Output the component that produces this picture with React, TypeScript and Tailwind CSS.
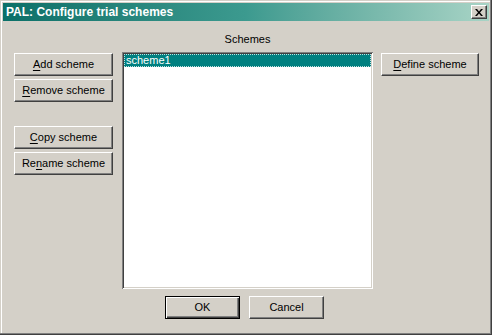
import React from 'react';

const raised =
  'border border-t-white border-l-white border-r-[#404040] border-b-[#404040] shadow-[inset_-1px_-1px_#808080]';

function Btn({ children, className = '', isDefault = false }: { children: React.ReactNode; className?: string; isDefault?: boolean }) {
  const frame = isDefault
    ? 'border border-black shadow-[inset_1px_1px_#fff,inset_-1px_-1px_#404040,inset_-2px_-2px_#808080]'
    : raised;
  return (
    <div className={`flex items-center justify-center h-[23px] bg-[#d4d0c8] text-[11px] text-black leading-none ${frame} ${className}`}>
      <span className="pb-[1px]">{children}</span>
    </div>
  );
}

export default function App() {
  return (
    <div
      className="w-[492px] h-[335px] bg-[#d4d0c8] p-[3px] flex flex-col shadow-[inset_-1px_-1px_#404040,inset_-2px_-2px_#808080,inset_1px_1px_#d4d0c8,inset_2px_2px_#fff]"
      style={{ fontFamily: '"Liberation Sans", Arial, sans-serif' }}
    >
      {/* title bar */}
      <div className="h-[18px] flex items-center justify-between bg-gradient-to-r from-[#0a7068] via-[#3c9a8f] to-[#a8d4c6] pl-[3px] pr-[2px]">
        <span className="text-white font-bold text-[12px] leading-none">PAL: Configure trial schemes</span>
        <div className={`w-[16px] h-[14px] flex items-center justify-center bg-[#d4d0c8] ${raised}`}>
          <svg width="8" height="7" viewBox="0 0 8 7">
            <path d="M0 0h2l2 2.5L6 0h2L5 3.5 8 7H6L4 4.5 2 7H0l3-3.5z" fill="#000" />
          </svg>
        </div>
      </div>

      {/* body */}
      <div className="flex pl-[11px]">
        <div className="flex flex-col w-[99px] mt-[32px]">
          <Btn><span className="underline underline-offset-2">A</span>dd scheme</Btn>
          <Btn className="mt-[3px]"><span className="underline underline-offset-2">R</span>emove scheme</Btn>
          <Btn className="mt-[24px]"><span className="underline underline-offset-2">C</span>opy scheme</Btn>
          <Btn className="mt-[3px]">Re<span className="underline underline-offset-2">n</span>ame scheme</Btn>
        </div>

        <div className="flex flex-col ml-[9px] w-[251px]">
          <div className="h-[31px] flex items-end justify-center pb-[7px] text-[11px] text-black leading-none">Schemes</div>
          <div className="h-[237px] bg-white p-[2px] shadow-[inset_1px_1px_#808080,inset_-1px_-1px_#fff,inset_2px_2px_#404040,inset_-2px_-2px_#d4d0c8]">
            <div className="h-[13px] bg-[#008080] text-white text-[11px] leading-none flex items-center pl-[2px] outline outline-1 outline-dotted outline-offset-[-1px] outline-[#c0e0e0]">
              scheme1
            </div>
          </div>
        </div>

        <div className="flex flex-col ml-[8px] w-[98px] mt-[32px]">
          <Btn><span className="underline underline-offset-2">D</span>efine scheme</Btn>
        </div>
      </div>

      <div className="flex pl-[162px] mt-[7px] gap-[9px]">
        <Btn isDefault className="w-[75px]">OK</Btn>
        <Btn className="w-[75px]">Cancel</Btn>
      </div>
    </div>
  );
}
